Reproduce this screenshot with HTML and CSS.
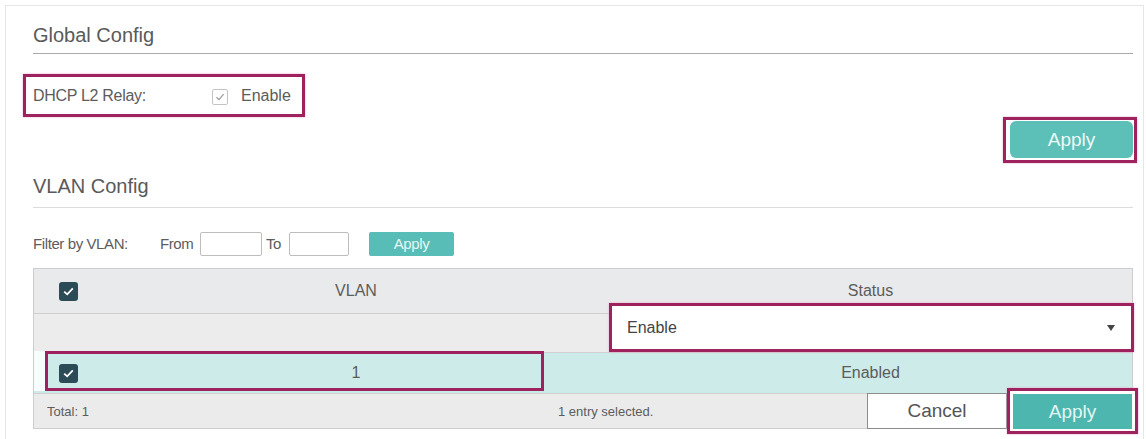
FILE: index.html
```html
<!DOCTYPE html>
<html lang="en">
<head>
  <meta charset="UTF-8" />
  <title>DHCP L2 Relay</title>
  <link rel="stylesheet" href="styles.css">
</head>
<body>
  <div class="panel">
    <div class="section-title global">Global Config</div>

    <div class="relay-row mark">
      <span class="relay-label">DHCP L2 Relay:</span>
      <span class="check-light">
        <svg width="10" height="10" viewBox="0 0 10 10"><path d="M1.5 5.2 L4 7.6 L8.6 2.2" fill="none" stroke="#9a9a9a" stroke-width="1.2"/></svg>
      </span>
      <span class="relay-text">Enable</span>
    </div>

    <div class="apply-row">
      <div class="mark apply-mark">
        <button class="btn-apply">Apply</button>
      </div>
    </div>

    <div class="section-title vlan">VLAN Config</div>

    <div class="filter">
      <span class="filter-label">Filter by VLAN:</span>
      <span class="filter-from">From</span>
      <input class="filter-input" type="text">
      <span class="filter-to">To</span>
      <input class="filter-input short" type="text">
      <button class="btn-filter">Apply</button>
    </div>

    <div class="table">
      <div class="row head">
        <div class="cell"><span class="check-dark"><svg width="11" height="9" viewBox="0 0 11 9"><path d="M1.2 4.6 L4.2 7.3 L9.8 1.4" fill="none" stroke="#fff" stroke-width="1.8"/></svg></span></div>
        <div class="cell">VLAN</div>
        <div class="cell">Status</div>
      </div>

      <div class="row edit">
        <div class="cell"></div>
        <div class="cell"></div>
        <div class="cell status-cell">
          <div class="select mark">
            <span>Enable</span>
            <span class="caret"></span>
          </div>
        </div>
      </div>

      <div class="row selected">
        <div class="cell"><span class="check-dark"><svg width="11" height="9" viewBox="0 0 11 9"><path d="M1.2 4.6 L4.2 7.3 L9.8 1.4" fill="none" stroke="#fff" stroke-width="1.8"/></svg></span></div>
        <div class="cell">1</div>
        <div class="cell">Enabled</div>
      </div>

      <div class="table-foot">
        <span class="total">Total: 1</span>
        <span class="selected-count">1 entry selected.</span>
        <button class="btn-cancel">Cancel</button>
        <div class="mark foot-mark">
          <button class="btn-foot-apply">Apply</button>
        </div>
      </div>

      <div class="mark row-mark"></div>
    </div>
  </div>
</body>
</html>
```

FILE: styles.css
```css
* {
  box-sizing: border-box;
  font-family: 'Liberation Sans', Arial, sans-serif;
}

body {
  margin: 0;
  padding: 5px 2px 0 5px;
  background: #fff;
  color: #5c5c5c;
}

.panel {
  border: 1px solid #e6e6e6;
  border-bottom: none;
  padding: 0 10px 30px 27px;
}

/* pink annotation frames */
.mark {
  border: 3px solid #9e225e;
  box-shadow: 0 0 2px #e9a6c6;
}

.section-title {
  font-size: 20px;
  line-height: 24px;
  color: #5a5a5a;
}

.section-title.global {
  padding: 17px 0 6px;
  border-bottom: 1px solid #a9a9a9;
}

.section-title.vlan {
  padding: 11px 0 9px;
  border-bottom: 1px solid #dcdcdc;
}

.relay-row {
  display: flex;
  align-items: center;
  width: 282px;
  height: 43px;
  margin: 20px 0 0 -10px;
  padding-left: 7px;
  font-size: 16px;
}

.relay-label {
  width: 179px;
  letter-spacing: -0.3px;
}

.check-light {
  width: 16px;
  height: 16px;
  border: 1px solid #c4c4c4;
  border-radius: 2px;
  display: flex;
  align-items: center;
  justify-content: center;
  margin-top: 2px;
}

.relay-text {
  margin-left: 13px;
}

.apply-row {
  display: flex;
  justify-content: flex-end;
  margin-right: -4px;
}

.apply-mark {
  padding: 1px 1px 2px 4px;
}

.btn-apply {
  width: 123px;
  height: 37px;
  border: none;
  border-radius: 6px;
  background: #5cc0b9;
  color: #eefaf8;
  font-size: 19px;
  display: block;
}

.filter {
  display: flex;
  align-items: center;
  height: 25px;
  margin-top: 23px;
  font-size: 15px;
  letter-spacing: -0.4px;
  color: #5c5c5c;
}

.filter-label {
  width: 127px;
}

.filter-from {
  width: 40px;
}

.filter-to {
  width: 27px;
  padding-left: 4px;
}

.filter-input {
  width: 62px;
  height: 24px;
  border: 1px solid #bdbdbd;
  border-radius: 2px;
  background: #fff;
}

.filter-input.short {
  width: 60px;
}

.btn-filter {
  width: 85px;
  height: 24px;
  margin-left: 20px;
  border: none;
  border-radius: 2px;
  background: #58bdb6;
  color: #e6f7f5;
  font-size: 15px;
  letter-spacing: -0.4px;
}

.table {
  position: relative;
  margin-top: 12px;
  border: 1px solid #cdcdcd;
  font-size: 16px;
}

.row {
  display: grid;
  grid-template-columns: 69px 506px 1fr;
  border-bottom: 1px solid #cfcfcf;
}

.cell {
  display: flex;
  align-items: center;
  justify-content: center;
}

.row.head {
  height: 45px;
  background: #e9eaeb;
}

.row.edit {
  height: 39px;
  background: #ececed;
}

.row.selected {
  height: 41px;
  background: #cdebe9;
}

.check-dark {
  width: 19px;
  height: 19px;
  border-radius: 3px;
  background: #2b4b56;
  display: flex;
  align-items: center;
  justify-content: center;
}

.status-cell {
  align-items: flex-start;
}

.select {
  position: relative;
  width: calc(100% + 2px);
  height: 49px;
  margin-top: -11px;
  margin-right: -2px;
  background: #fff;
  display: flex;
  align-items: center;
  justify-content: space-between;
  padding: 0 16px 0 15px;
  color: #444;
}

.caret {
  width: 0;
  height: 0;
  border-left: 4px solid transparent;
  border-right: 4px solid transparent;
  border-top: 6px solid #444;
}

.table-foot {
  display: flex;
  align-items: center;
  height: 34px;
  background: #ebebeb;
  font-size: 13px;
  color: #5c5c5c;
}

.total {
  width: 524px;
  padding-left: 13px;
}

.selected-count {
  flex: 1;
}

.btn-cancel {
  width: 140px;
  height: 36px;
  border: 1px solid #8c8c8c;
  background: #fff;
  color: #555;
  font-size: 19px;
}

.foot-mark {
  margin-right: -6px;
  padding: 3px 3px 2px 3px;
  background: #fff;
}

.btn-foot-apply {
  display: block;
  width: 119px;
  height: 35px;
  border: none;
  background: #4db6ae;
  color: #e2f6f4;
  font-size: 19px;
}

.row-mark {
  position: absolute;
  left: 11px;
  top: 82px;
  width: 499px;
  height: 40px;
  box-shadow: -11px 0 0 #f7fcfc;
}
```
